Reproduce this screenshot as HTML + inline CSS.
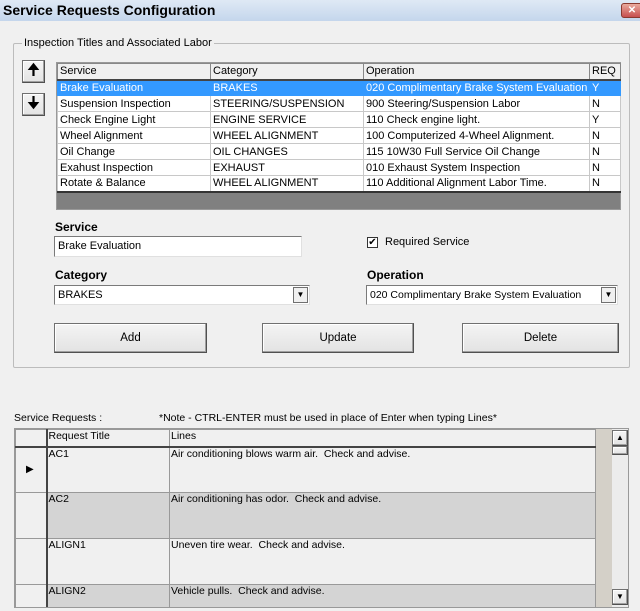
<!DOCTYPE html>
<html><head><style>
*{box-sizing:border-box;margin:0;padding:0}
body{width:640px;height:611px;background:#f0f0f0;font-family:"Liberation Sans",sans-serif;font-size:11px;color:#000;position:relative;overflow:hidden}
.a{position:absolute}
.title{left:0;top:0;width:640px;height:21px;background:linear-gradient(#dfe9f5,#c4d6ec);font-weight:bold;font-size:14px;padding:2px 0 0 3px}
.close{left:621px;top:3px;width:22px;height:15px;background:linear-gradient(#e9a99c,#c75050);border:1px solid #8a3a30;border-radius:3px;color:#fff;font-size:10px;text-align:center;line-height:13px;font-weight:bold}
.grp{left:13px;top:43px;width:617px;height:325px;border:1px solid #bcbcbc;border-radius:2px}
.lbl{background:#f0f0f0;padding:0 2px}
.btn{background:linear-gradient(#f4f4f4,#e3e3e3);border:1px solid #707070;border-right-color:#505050;border-bottom-color:#505050;box-shadow:inset -1px -1px #a0a0a0,inset 1px 1px #fff;text-align:center;font-size:11.5px}
table{border-collapse:collapse;table-layout:fixed}
.t1 td{height:16px;border:1px solid #c8c8c8;padding:0 2px;white-space:nowrap;overflow:hidden;font-size:11px}
.t1 th{height:16px;border:1px solid #888;background:#f0f0f0;font-weight:normal;text-align:left;padding:0 2px;font-size:11px;border-bottom:2px solid #444}
.sel td{background:#3399ff;color:#fff;border-color:#3399ff}
.t2 td,.t2 th{border:1px solid #999;vertical-align:top;padding:0 1px;font-weight:normal;text-align:left;font-size:10.5px}
.t2 th{height:17px;background:#f0f0f0;border-bottom:2px solid #444}
.t2 td{height:46px}
.g td{background:#d4d4d4}
.ind{background:#f0f0f0 !important;border-right:2px solid #444 !important}
.inp{background:#fff;border:1px solid #7a7a7a;border-right-color:#e0e0e0;border-bottom-color:#e0e0e0;padding:3px 3px;font-size:11px;white-space:nowrap;overflow:hidden}
.dd{position:absolute;right:1px;top:1px;width:15px;height:16px;background:#f0f0f0;border:1px solid #707070;font-size:8px;text-align:center;line-height:14px}
b.h{position:absolute;font-size:12px}
</style></head><body>
<div class="a title">Service Requests Configuration</div>
<div class="a close">✕</div>
<div class="a grp"></div>
<div class="a lbl" style="left:22px;top:37px;font-size:11px">Inspection Titles and Associated Labor</div>
<div class="a btn" style="left:22px;top:60px;width:23px;height:23px;font-size:16px;line-height:20px">🠉</div>
<div class="a btn" style="left:22px;top:93px;width:23px;height:23px;font-size:16px;line-height:20px">🠋</div>
<div class="a" style="left:56px;top:62px;width:565px;height:148px;background:#808080;border:1px solid #999">
<table class="t1" style="width:563px;background:#fff">
<colgroup><col style="width:153px"><col style="width:153px"><col style="width:226px"><col style="width:31px"></colgroup>
<tr><th>Service</th><th>Category</th><th>Operation</th><th>REQ</th></tr>
<tr class="sel"><td>Brake Evaluation</td><td>BRAKES</td><td>020 Complimentary Brake System Evaluation</td><td>Y</td></tr>
<tr><td>Suspension Inspection</td><td>STEERING/SUSPENSION</td><td>900 Steering/Suspension Labor</td><td>N</td></tr>
<tr><td>Check Engine Light</td><td>ENGINE SERVICE</td><td>110 Check engine light.</td><td>Y</td></tr>
<tr><td>Wheel Alignment</td><td>WHEEL ALIGNMENT</td><td>100 Computerized 4-Wheel Alignment.</td><td>N</td></tr>
<tr><td>Oil Change</td><td>OIL CHANGES</td><td>115 10W30 Full Service Oil Change</td><td>N</td></tr>
<tr><td>Exahust Inspection</td><td>EXHAUST</td><td>010 Exhaust System Inspection</td><td>N</td></tr>
<tr style="border-bottom:2px solid #333"><td>Rotate &amp; Balance</td><td>WHEEL ALIGNMENT</td><td>110 Additional Alignment Labor Time.</td><td>N</td></tr>
</table></div>
<b class="h" style="left:55px;top:220px">Service</b>
<div class="a inp" style="left:54px;top:236px;width:248px;height:21px">Brake Evaluation</div>
<div class="a" style="left:367px;top:237px;width:11px;height:11px;background:#fff;border:1px solid #333;font-size:10px;line-height:9px;text-align:center">✔</div>
<div class="a" style="left:385px;top:236px;font-size:11px">Required Service</div>
<b class="h" style="left:55px;top:268px">Category</b>
<div class="a inp" style="left:54px;top:285px;width:256px;height:20px">BRAKES<div class="dd">▼</div></div>
<b class="h" style="left:367px;top:268px">Operation</b>
<div class="a inp" style="left:366px;top:285px;width:252px;height:20px;font-size:10.5px">020 Complimentary Brake System Evaluation<div class="dd">▼</div></div>
<div class="a btn" style="left:54px;top:323px;width:153px;height:30px;line-height:28px">Add</div>
<div class="a btn" style="left:262px;top:323px;width:152px;height:30px;line-height:28px">Update</div>
<div class="a btn" style="left:462px;top:323px;width:157px;height:30px;line-height:28px">Delete</div>
<div class="a" style="left:14px;top:412px;font-size:10.5px">Service Requests :</div>
<div class="a" style="left:159px;top:412px;font-size:10.5px">*Note - CTRL-ENTER must be used in place of Enter when typing Lines*</div>
<div class="a" style="left:14px;top:428px;width:615px;height:180px;background:#d4d0c8;border:1px solid #999;overflow:hidden">
<table class="t2" style="width:580px;background:#f0f0f0">
<colgroup><col style="width:31px"><col style="width:123px"><col style="width:426px"></colgroup>
<tr><th class="ind"></th><th>Request Title</th><th>Lines</th></tr>
<tr><td class="ind" style="vertical-align:middle;font-size:10px;padding-left:10px">▶</td><td>AC1</td><td>Air conditioning blows warm air.&nbsp; Check and advise.</td></tr>
<tr class="g"><td class="ind"></td><td>AC2</td><td>Air conditioning has odor.&nbsp; Check and advise.</td></tr>
<tr><td class="ind"></td><td>ALIGN1</td><td>Uneven tire wear.&nbsp; Check and advise.</td></tr>
<tr class="g"><td class="ind"></td><td>ALIGN2</td><td>Vehicle pulls.&nbsp; Check and advise.</td></tr>
</table>
<div class="a" style="left:597px;top:0;width:17px;height:180px;background:#ececec"></div>
<div class="a btn" style="left:597px;top:1px;width:16px;height:16px;font-size:8px;line-height:14px">▲</div>
<div class="a btn" style="left:597px;top:17px;width:16px;height:9px"></div>
<div class="a btn" style="left:597px;top:160px;width:16px;height:16px;font-size:8px;line-height:14px">▼</div>
</div>
</body></html>
